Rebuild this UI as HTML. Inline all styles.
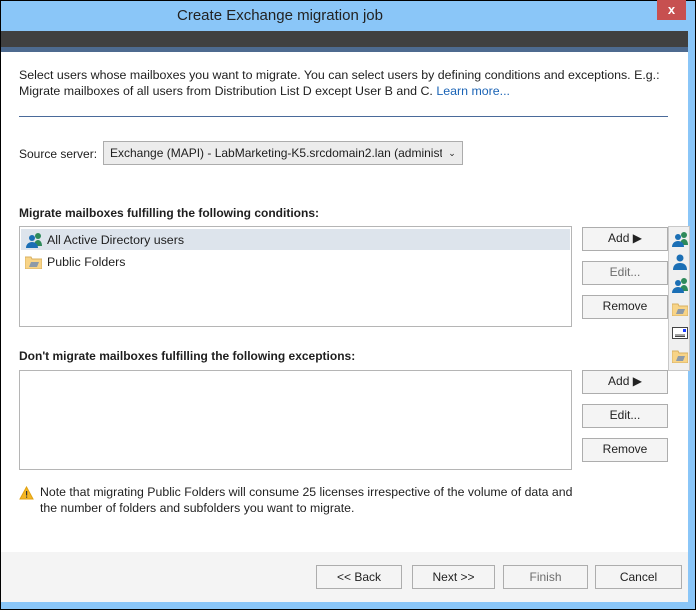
<!DOCTYPE html>
<html><head><style>
*{margin:0;padding:0;box-sizing:border-box}
body{width:696px;height:610px;position:relative;overflow:hidden;background:#fff;font-family:"Liberation Sans",sans-serif;font-size:12px;color:#1e1e1e}
.a{position:absolute}
.btn{position:absolute;background:#f4f4f4;border:1px solid #adadad;text-align:center;line-height:21px;font-size:12px;color:#222}
.dis{color:#6d6d6d}
.list{position:absolute;border:1px solid #b5b5b5;background:#fff}
</style></head><body>
<div class="a" style="left:0;top:0;width:696px;height:610px;background:#8ac6f8;border:1px solid #000"></div>
<div class="a" style="left:1px;top:31px;width:687px;height:571px;background:#fff"></div>
<div class="a" style="left:1px;top:31px;width:687px;height:16px;background:#404040"></div>
<div class="a" style="left:1px;top:47px;width:687px;height:5px;background:#4d6a8f"></div>
<div class="a" style="left:657px;top:0;width:29px;height:20px;background:#c75050;color:#fff;text-align:center;line-height:20px;font-size:13px;font-weight:bold">x</div>
<div class="a" style="left:0;top:7px;width:560px;text-align:center;font-size:15px;color:#222">Create Exchange migration job</div>
<div class="a" style="left:1px;top:552px;width:687px;height:50px;background:#f4f4f4"></div>

<div class="a" style="left:19px;top:67px;width:670px;line-height:16px;font-size:12.4px;white-space:nowrap">Select users whose mailboxes you want to migrate. You can select users by defining conditions and exceptions. E.g.:<br>Migrate mailboxes of all users from Distribution List D except User B and C. <span style="color:#1a63b5">Learn more...</span></div>
<div class="a" style="left:19px;top:116px;width:649px;height:1px;background:#4a6a9a"></div>
<div class="a" style="left:19px;top:147px;font-size:12px">Source server:</div>
<div class="a" style="left:103px;top:141px;width:360px;height:24px;border:1px solid #acacac;background:#ececec;padding-left:6px;line-height:22px;font-size:12px;white-space:nowrap;overflow:hidden">Exchange (MAPI) - LabMarketing-K5.srcdomain2.lan (administra<span class="a" style="right:0;top:0;width:20px;text-align:center;font-size:9px;background:#ececec">&#8964;</span></div>

<div class="a" style="left:19px;top:206px;font-weight:bold;font-size:12px">Migrate mailboxes fulfilling the following conditions:</div>
<div class="list" style="left:19px;top:226px;width:553px;height:101px"></div>
<div class="a" style="left:21px;top:229px;width:549px;height:21px;background:#dde4ec"></div>
<svg class="a" style="left:25px;top:232px" width="18" height="16"><circle cx="13" cy="4" r="3" fill="#2e8a5a"/><path d="M9 14c0-4 2-6 4-6s4 2 4 6z" fill="#2e8a5a"/><circle cx="7" cy="6" r="3" fill="#1b6fb5"/><path d="M1 16c0-4 3-6 6-6s6 2 6 6z" fill="#1b6fb5"/></svg>
<div class="a" style="left:47px;top:233px;font-size:12.4px">All Active Directory users</div>
<svg class="a" style="left:25px;top:256px" width="17" height="13"><path d="M0 1h6l1 2h10v10H0z" fill="#f8d487" stroke="#d8b060"/><path d="M4 11l2-5h8l-2 5z" fill="#8d9aa8"/></svg>
<div class="a" style="left:47px;top:255px;font-size:12.4px">Public Folders</div>

<div class="btn" style="left:582px;top:227px;width:86px;height:24px">Add &#9654;</div>
<div class="btn dis" style="left:582px;top:261px;width:86px;height:24px">Edit...</div>
<div class="btn" style="left:582px;top:295px;width:86px;height:24px">Remove</div>

<div class="a" style="left:19px;top:349px;font-weight:bold;font-size:12px">Don't migrate mailboxes fulfilling the following exceptions:</div>
<div class="list" style="left:19px;top:370px;width:553px;height:100px"></div>
<div class="btn" style="left:582px;top:370px;width:86px;height:24px">Add &#9654;</div>
<div class="btn" style="left:582px;top:404px;width:86px;height:24px">Edit...</div>
<div class="btn" style="left:582px;top:438px;width:86px;height:24px">Remove</div>

<div class="a" style="left:668px;top:226px;width:22px;height:145px;background:#f0f0f0;border:1px solid #c8c8c8">
<svg class="a" style="left:2px;top:4px" width="18" height="16"><circle cx="13" cy="4" r="3" fill="#2e8a5a"/><path d="M9 14c0-4 2-6 4-6s4 2 4 6z" fill="#2e8a5a"/><circle cx="7" cy="6" r="3" fill="#1b6fb5"/><path d="M1 16c0-4 3-6 6-6s6 2 6 6z" fill="#1b6fb5"/></svg>
<svg class="a" style="left:3px;top:27px" width="16" height="16"><circle cx="8" cy="4" r="3.5" fill="#1b6fb5"/><path d="M1 16c0-5 3-7 7-7s7 2 7 7z" fill="#1b6fb5"/></svg>
<svg class="a" style="left:2px;top:50px" width="18" height="16"><circle cx="13" cy="4" r="3" fill="#2e8a5a"/><path d="M9 14c0-4 2-6 4-6s4 2 4 6z" fill="#2e8a5a"/><circle cx="7" cy="6" r="3" fill="#1b6fb5"/><path d="M1 16c0-4 3-6 6-6s6 2 6 6z" fill="#1b6fb5"/></svg>
<svg class="a" style="left:3px;top:76px" width="16" height="13"><path d="M0 1h6l1 2h9v10H0z" fill="#f8d487" stroke="#d8b060"/><path d="M4 11l2-5h7l-2 5z" fill="#8d9aa8"/></svg>
<svg class="a" style="left:3px;top:100px" width="16" height="12"><rect x="0.5" y="0.5" width="15" height="11" fill="#fff" stroke="#444"/><rect x="11" y="2" width="3" height="3" fill="#1a3cff"/><path d="M3 8h10M3 9.5h10" stroke="#444"/></svg>
<svg class="a" style="left:3px;top:123px" width="16" height="13"><path d="M0 1h6l1 2h9v10H0z" fill="#f8d487" stroke="#d8b060"/><path d="M4 11l2-5h7l-2 5z" fill="#8d9aa8"/></svg>
</div>

<svg class="a" style="left:19px;top:486px" width="15" height="14"><path d="M7.5 1L14 13H1z" fill="#f4b624" stroke="#e0a010"/><rect x="7" y="5" width="1.2" height="4.5" fill="#333"/><rect x="7" y="10.5" width="1.2" height="1.2" fill="#333"/></svg>
<div class="a" style="left:40px;top:484px;line-height:16px;font-size:12.3px;white-space:nowrap">Note that migrating Public Folders will consume 25 licenses irrespective of the volume of data and<br>the number of folders and subfolders you want to migrate.</div>

<div class="btn" style="left:316px;top:565px;width:86px;height:24px;line-height:22px">&lt;&lt; Back</div>
<div class="btn" style="left:412px;top:565px;width:83px;height:24px;line-height:22px">Next &gt;&gt;</div>
<div class="btn dis" style="left:503px;top:565px;width:85px;height:24px;line-height:22px">Finish</div>
<div class="btn" style="left:595px;top:565px;width:87px;height:24px;line-height:22px">Cancel</div>
</body></html>
